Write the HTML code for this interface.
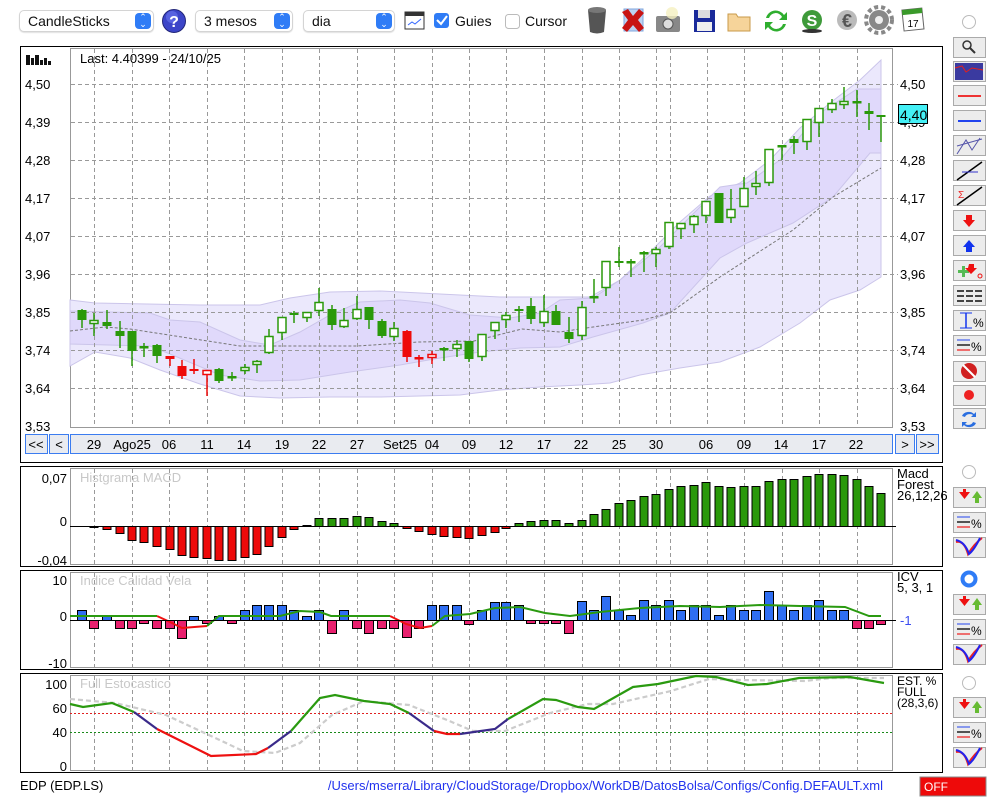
<!DOCTYPE html>
<html><head><meta charset="utf-8">
<style>
*{margin:0;padding:0;box-sizing:border-box}
body{width:1000px;height:800px;background:#fff;font-family:"Liberation Sans",sans-serif;position:relative;overflow:hidden;color:#111}
.sel{position:absolute;top:10px;height:22px;border:1px solid #d4d4d4;border-radius:5px;background:#fff;box-shadow:0 1px 1px rgba(0,0,0,.12);font-size:14px;line-height:20px;padding-left:8px}
.sel .st{position:absolute;right:2px;top:2px;width:16px;height:16px;border-radius:4px;background:#2f7cf6;color:#fff;font-size:9px;line-height:7px;text-align:center;padding-top:1px}
.lbl{position:absolute;font-size:14px}
svg{position:absolute;left:0;top:0}
</style></head><body>
<div class="sel" style="left:19px;width:135px">CandleSticks<div class="st">&#8963;<br>&#8964;</div></div>
<div class="sel" style="left:195px;width:98px">3 mesos<div class="st">&#8963;<br>&#8964;</div></div>
<div class="sel" style="left:303px;width:92px">dia<div class="st">&#8963;<br>&#8964;</div></div>
<div class="lbl" style="left:455px;top:13px">Guies</div>
<div class="lbl" style="left:525px;top:13px">Cursor</div>

<svg width="1000" height="800" id="s" font-family="Liberation Sans, sans-serif">
<circle cx="174" cy="21" r="11.5" fill="#3c45c8" stroke="#22267a"/>
<circle cx="172" cy="17" r="6" fill="#6b78f0" opacity=".6"/>
<text x="174" y="27" font-size="16" font-weight="bold" fill="#fff" text-anchor="middle">?</text>
<rect x="405" y="12" width="19" height="17" fill="#fff" stroke="#333"/>
<rect x="405" y="12" width="19" height="4" fill="#333"/>
<polyline points="408,25 412,22 415,24 421,19" fill="none" stroke="#36f" stroke-width="1"/>
<rect x="434" y="13" width="15" height="15" rx="3" fill="#2f7cf6"/>
<polyline points="437,20 441,24 447,16" fill="none" stroke="#fff" stroke-width="2"/>
<rect x="505.5" y="14.5" width="14" height="14" rx="3" fill="#fff" stroke="#bbb"/>
<path d="M588,10 h18 l-2,22 q-7,3 -14,0 z" fill="#555"/><ellipse cx="597" cy="10" rx="9" ry="3" fill="#777"/>
<rect x="624" y="9" width="19" height="22" fill="#bcd3f3" stroke="#7fa6dc"/>
<path d="M622,12 l6,-3 l5,7 l6,-7 l5,4 l-6,7 l6,8 l-5,4 l-6,-7 l-6,7 l-5,-4 l6,-8 z" fill="#c81414"/>
<rect x="656" y="16" width="24" height="16" rx="2" fill="#888"/><circle cx="668" cy="24" r="5" fill="#ddd" stroke="#555"/><circle cx="672" cy="13" r="6" fill="#f5f0c0" opacity=".8"/>
<rect x="694" y="10" width="21" height="22" fill="#1a2a9a"/><rect x="698" y="10" width="12" height="8" fill="#ddd"/><rect x="697" y="22" width="15" height="9" fill="#eee"/>
<path d="M728,14 h8 l2,3 h12 v14 h-22 z" fill="#f6d49a" stroke="#c89a4a"/>
<path d="M766,18 a10,10 0 0 1 18,-3 l3,-3 v8 h-8 l3,-3 a7,7 0 0 0 -13,1 z M786,24 a10,10 0 0 1 -18,3 l-3,3 v-8 h8 l-3,3 a7,7 0 0 0 13,-1 z" fill="#2fae2f"/>
<circle cx="812" cy="20" r="10" fill="#3e9a3a"/><text x="812" y="26" font-size="16" font-weight="bold" fill="#fff" text-anchor="middle">S</text><ellipse cx="812" cy="31" rx="10" ry="2" fill="#333"/>
<circle cx="847" cy="20" r="10" fill="#bbb"/><text x="847" y="27" font-size="18" font-weight="bold" fill="#555" text-anchor="middle">€</text>
<circle cx="879" cy="20" r="10" fill="#888"/><circle cx="879" cy="20" r="13" fill="none" stroke="#888" stroke-width="4" stroke-dasharray="4,3"/><circle cx="879" cy="20" r="4" fill="#eee"/>
<rect x="903" y="9" width="20" height="21" fill="#fff" stroke="#666" transform="rotate(-6 913 20)"/><rect x="903" y="9" width="20" height="5" fill="#3a9a2a" transform="rotate(-6 913 20)"/>
<text x="913" y="27" font-size="10" text-anchor="middle">17</text>

<rect x="20.5" y="46.5" width="922" height="416" fill="#fff" stroke="#000"/>
<rect x="70.5" y="48.5" width="822" height="379" fill="#fff" stroke="#999"/>
<g fill="#111"><rect x="26" y="55" width="4" height="10"/><rect x="31" y="58" width="3" height="7"/><rect x="35" y="55" width="4" height="10"/><rect x="40" y="60" width="3" height="5"/><rect x="44" y="58" width="3" height="7"/><rect x="48" y="61" width="3" height="4"/></g>
<g id="bands"></g>
<g id="grid"></g>
<text x="80" y="63" font-size="13">Last: 4.40399 - 24/10/25</text>
<g font-size="13">
<text x="25" y="89">4,50</text><text x="25" y="127">4,39</text><text x="25" y="165">4,28</text><text x="25" y="203">4,17</text><text x="25" y="241">4,07</text><text x="25" y="279">3,96</text><text x="25" y="317">3,85</text><text x="25" y="355">3,74</text><text x="25" y="393">3,64</text><text x="25" y="431">3,53</text>
<text x="900" y="89">4,50</text><text x="900" y="127">4,39</text><text x="900" y="165">4,28</text><text x="900" y="203">4,17</text><text x="900" y="241">4,07</text><text x="900" y="279">3,96</text><text x="900" y="317">3,85</text><text x="900" y="355">3,74</text><text x="900" y="393">3,64</text><text x="900" y="431">3,53</text>
</g>
<g id="candles"></g>
<rect x="898.5" y="104.5" width="29" height="19" fill="#44f0f6" stroke="#000"/>
<text x="900" y="120" font-size="14">4,40</text>
<g fill="#e9ebf0" stroke="#3b7cf0">
<rect x="25.5" y="434.5" width="22" height="19"/><rect x="49.5" y="434.5" width="19" height="19"/><rect x="70.5" y="434.5" width="822" height="19"/><rect x="895.5" y="434.5" width="19" height="19"/><rect x="916.5" y="434.5" width="22" height="19"/></g>
<g font-size="13" text-anchor="middle">
<text x="36" y="449">&lt;&lt;</text><text x="59" y="449">&lt;</text><text x="905" y="449">&gt;</text><text x="927" y="449">&gt;&gt;</text>
<text x="94" y="449">29</text><text x="132" y="449">Ago25</text><text x="169" y="449">06</text><text x="207" y="449">11</text><text x="244" y="449">14</text><text x="282" y="449">19</text><text x="319" y="449">22</text><text x="357" y="449">27</text><text x="400" y="449">Set25</text><text x="432" y="449">04</text><text x="469" y="449">09</text><text x="506" y="449">12</text><text x="544" y="449">17</text><text x="581" y="449">22</text><text x="619" y="449">25</text><text x="656" y="449">30</text><text x="706" y="449">06</text><text x="744" y="449">09</text><text x="781" y="449">14</text><text x="819" y="449">17</text><text x="856" y="449">22</text>
</g>

<rect x="20.5" y="466.5" width="922" height="100" fill="#fff" stroke="#000"/>
<rect x="70.5" y="468.5" width="822" height="96" fill="#fff" stroke="#999"/>
<g id="grid2"></g>
<text x="80" y="482" font-size="13" fill="#c8c8c8">Histgrama MACD</text>
<g font-size="13" text-anchor="end"><text x="67" y="483">0,07</text><text x="67" y="526">0</text><text x="67" y="565">-0,04</text></g>
<g font-size="13"><text x="897" y="478">Macd</text><text x="897" y="489">Forest</text><text x="897" y="500">26,12,26</text></g>
<g id="macd"></g>
<line x1="70" y1="526.5" x2="896" y2="526.5" stroke="#000"/>

<rect x="20.5" y="570.5" width="922" height="99" fill="#fff" stroke="#000"/>
<rect x="70.5" y="572.5" width="822" height="95" fill="#fff" stroke="#999"/>
<g id="grid3"></g>
<text x="80" y="585" font-size="13" fill="#c8c8c8">Indice Calidad Vela</text>
<g font-size="13" text-anchor="end"><text x="67" y="585">10</text><text x="67" y="621">0</text><text x="67" y="668">-10</text></g>
<g font-size="13"><text x="897" y="581">ICV</text><text x="897" y="592">5, 3, 1</text><text x="900" y="625" fill="#3b4cf0">-1</text></g>
<g id="icv"></g>
<line x1="70" y1="620.5" x2="896" y2="620.5" stroke="#000"/>

<rect x="20.5" y="673.5" width="922" height="99" fill="#fff" stroke="#000"/>
<rect x="70.5" y="675.5" width="822" height="95" fill="#fff" stroke="#999"/>
<g id="grid4"></g>
<text x="80" y="688" font-size="13" fill="#c8c8c8">Full Estocastico</text>
<g font-size="13" text-anchor="end"><text x="67" y="689">100</text><text x="67" y="713">60</text><text x="67" y="737">40</text><text x="67" y="771">0</text></g>
<g font-size="12"><text x="897" y="685">EST. %</text><text x="897" y="696">FULL</text><text x="897" y="707">(28,3,6)</text></g>
<line x1="70" y1="713.5" x2="893" y2="713.5" stroke="#e02020" stroke-dasharray="2,2"/>
<line x1="70" y1="732.5" x2="893" y2="732.5" stroke="#1a8a1a" stroke-dasharray="2,2"/>
<polyline fill="none" stroke="#cccccc" stroke-width="2.2" stroke-dasharray="5,3" points="70,699 115,703 166,715 211,736 243,751 275,753 300,743 332,715 364,701 409,705 447,720 473,731 505,731 550,713 588,704 613,704 671,691 709,679 741,680 805,681 831,678 884,678"/>
<g fill="none" stroke-width="2.2">
<polyline stroke="#2a9a10" points="70,704 83,707 112,703 134,712"/>
<polyline stroke="#3a2a8a" points="134,712 157,729"/>
<polyline stroke="#ee1111" points="157,729 211,756 256,754 268,748"/>
<polyline stroke="#3a2a8a" points="268,748 291,731"/>
<polyline stroke="#2a9a10" points="291,731 320,698 335,695 364,701 390,704 409,713"/>
<polyline stroke="#3a2a8a" points="409,713 434,731"/>
<polyline stroke="#ee1111" points="434,731 447,734 460,734"/>
<polyline stroke="#3a2a8a" points="460,734 495,729 508,719"/>
<polyline stroke="#2a9a10" points="508,719 543,699 556,700 578,707 594,709 633,687 658,684 696,676 716,677 748,685 767,684 799,678 850,677 884,683"/>
</g>

<g id="side"></g>

<text x="20" y="790" font-size="13">EDP (EDP.LS)</text>
<text x="883" y="790" font-size="13" fill="#2233ee" text-anchor="end">/Users/mserra/Library/CloudStorage/Dropbox/WorkDB/DatosBolsa/Configs/Config.DEFAULT.xml</text>
<rect x="920" y="777" width="66" height="19" fill="#ee0a0a" stroke="#888"/>
<text x="924" y="791" font-size="12" fill="#fff">OFF</text>
</svg>
<script>
var NS="http://www.w3.org/2000/svg";
function el(p,t,a){var e=document.createElementNS(NS,t);for(var k in a)e.setAttribute(k,a[k]);document.getElementById(p).appendChild(e);return e;}
var VX=[94,132,169,207,244,282,319,357,394,432,469,506,544,582,619,656,670,707,744,782,819,857];
function vgrid(id,y1,y2){VX.forEach(function(x){el(id,'line',{x1:x+.5,y1:y1,x2:x+.5,y2:y2,stroke:'#999','stroke-dasharray':'4,3'})});}
vgrid('grid',49,427);vgrid('grid2',469,564);vgrid('grid3',573,667);vgrid('grid4',676,770);
[84,122,160,198,236,274,312,350,388].forEach(function(y){el('grid','line',{x1:71,y1:y+.5,x2:898,y2:y+.5,stroke:'#999','stroke-dasharray':'4,3'})});
el('bands','polygon',{points:"70,300 95,303 200,305 260,305 290,298 330,292 380,291 440,294 500,297 560,297 590,297 620,280 650,252 680,222 710,196 740,183 770,160 800,128 830,103 860,80 881,60 881,277 860,290 830,300 800,323 760,347 720,362 680,368 640,375 610,383 580,385 540,387 500,390 460,395 420,396 380,397 330,397 280,398 240,396 200,384 160,370 130,358 95,352 70,366",fill:'#ebe8fc',stroke:'#cbc5ea'});
el('bands','polygon',{points:"70,311 150,313 170,320 200,322 240,340 270,345 300,332 330,315 360,302 400,300 430,303 470,315 510,318 540,313 560,300 593,298 620,280 660,247 720,187 747,183 780,160 820,113 857,89 881,89 881,153 870,153 833,197 793,223 747,243 720,258 670,313 643,323 593,337 560,347 520,348 480,352 440,358 400,365 350,372 300,380 260,381 220,375 170,354 150,346 70,344",fill:'#e0d9fb',stroke:'#cbc5ea'});
el('bands','polyline',{points:"70,331 105,327 130,329 240,346 357,346 419,342 474,341 522,329 560,332 593,327 643,320 670,313 720,277 793,230 833,197 881,168",fill:'none',stroke:'#777','stroke-dasharray':'3,2'});
var C=[[82,'g',310,320,309,328],[94,'w',320,323,313,336],[107,'g',322,326,310,329],[120,'g',331,336,321,348],[132,'g',331,351,331,366],[144,'g',347,348,343,357],[157,'g',345,356,344,363],[170,'r',356,359,356,366],[182,'r',366,376,360,379],[194,'r',369,371,359,374],[207,'rw',370,374,370,396],[219,'g',369,381,368,383],[232,'g',377,378,372,381],[245,'w',367,370,364,374],[257,'w',361,364,360,373],[269,'w',336,352,329,354],[282,'w',317,332,317,340],[294,'g',313,315,311,323],[307,'w',312,317,312,322],[319,'w',302,310,288,316],[332,'g',309,325,305,330],[344,'w',320,326,308,328],[357,'w',309,318,296,320],[369,'g',307,320,307,329],[382,'g',321,336,319,338],[394,'w',328,336,322,341],[407,'r',331,357,330,362],[419,'r',358,359,355,367],[432,'rw',354,357,351,364],[444,'g',349,350,347,361],[457,'w',344,348,340,357],[469,'g',341,359,341,362],[482,'w',334,356,334,361],[495,'w',322,330,322,339],[506,'w',315,319,312,328],[519,'g',309,311,306,322],[531,'g',306,319,298,324],[544,'w',311,322,295,327],[556,'g',311,325,305,325],[569,'g',332,339,317,343],[582,'w',307,335,301,340],
[594,'g',297,297,279,303],[606,'w',261,287,261,296],[619,'g',261,263,247,267],[631,'g',262,262,259,277],[644,'g',253,253,251,272],[656,'w',249,253,247,267],[669,'w',222,246,222,249],[681,'w',223,228,223,239],[694,'w',216,224,215,233],[706,'w',201,215,201,223],[719,'g',193,223,193,223],[731,'w',209,217,189,223],[744,'w',188,206,177,206],[756,'w',183,186,171,195],[769,'w',149,182,149,186],[782,'g',146,146,146,160],[794,'g',139,143,136,154],[807,'w',119,141,119,150],[819,'w',108,122,108,137],[832,'w',103,109,99,113],[844,'w',101,104,87,109],[857,'g',102,102,90,117],[869,'g',111,114,103,130],[881,'g',115,117,115,142]];
C.forEach(function(c){var x=c[0],t=c[1],col=(t[0]=='r')?'#ee0a0a':'#2a990a';
 el('candles','line',{x1:x,y1:c[4],x2:x,y2:c[5],stroke:col,'stroke-width':1.5});
 var h=Math.max(c[3]-c[2],1);
 if(t=='w'||t=='rw'){el('candles','rect',{x:x-4,y:c[2]+.5,width:8,height:h,fill:'#fff',stroke:col,'stroke-width':1.5});}
 else if(h<=1){el('candles','rect',{x:x-4.5,y:c[2]-1,width:9,height:2.5,fill:col});}
 else el('candles','rect',{x:x-4.5,y:c[2],width:9,height:h,fill:col});});
var M=[526,527,529,533,540,542,546,549,555,557,558,560,560,557,554,546,537,529,525,518,518,518,516,517,521,523,528,531,534,536,537,538,535,532,528,523,521,520,520,523,520,514,509,503,500,496,494,489,486,485,482,486,487,486,486,481,479,479,476,474,474,475,479,486,493];
M.forEach(function(v,i){var x=C[i][0];if(v==526)return;var y=Math.min(v,526),h=Math.abs(v-526);
 el('macd','rect',{x:x-4,y:y+.5,width:8,height:h,fill:v<526?'#2a990a':'#ee0a0a',stroke:'#000'});});
var I=[610,628,616,628,628,623,628,628,638,616,623,616,623,610,605,605,605,610,616,610,633,610,628,633,628,628,637,628,605,605,605,624,610,602,602,605,623,623,623,633,601,610,596,610,615,600,605,600,610,605,605,615,605,610,610,591,605,610,605,600,610,610,628,628,624];
I.forEach(function(v,i){var x=C[i][0];var y=Math.min(v,620),h=Math.abs(v-620);
 el('icv','rect',{x:x-4.5,y:y+.5,width:9,height:h,fill:v<620?'#2f6ef2':'#e8206e',stroke:'#000'});});
[["#2a9a10","70,616 157,616"],["#ee1111","157,616 170,622 182,628 207,626"],["#2a9a10","207,626 219,616 280,616 300,611 320,612 331,616 390,616"],["#ee1111","390,616 406,624 420,628 432,626"],["#2a9a10","432,626 445,616 470,614 495,608 520,607 545,613 570,616 600,612 640,608 680,606 720,607 760,605 800,606 845,607 869,616 881,616"]].forEach(function(p){el('icv','polyline',{points:p[1],fill:'none',stroke:p[0],'stroke-width':2});});
function btn(y){el('side','rect',{x:953.5,y:y+.5,width:32,height:20,fill:'#ececec',stroke:'#aaa'});}
function radio(y,on){el('side','circle',{cx:969,cy:y,r:6.5,fill:'#fff',stroke:on?'#2f7cf6':'#bbb','stroke-width':on?4:1});}
radio(22,false);
var ys=[37,61,85,110,135,160,185,210,235,260,285,310,335,361,385,408];ys.forEach(btn);
el('side','circle',{cx:967,cy:45,r:4,fill:'none',stroke:'#333','stroke-width':1.5});el('side','line',{x1:970,y1:48,x2:975,y2:53,stroke:'#333','stroke-width':2});
el('side','rect',{x:955,y:63,width:28,height:17,fill:'#3a3aa0'});el('side','polyline',{points:"955,68 962,66 966,72 972,68 983,70",fill:'none',stroke:'#e02020'});
el('side','line',{x1:958,y1:96,x2:981,y2:96,stroke:'#e33',"stroke-width":2});
el('side','line',{x1:958,y1:121,x2:981,y2:121,stroke:'#24e',"stroke-width":2});
el('side','polyline',{points:"957,154 966,140 972,150 980,138",fill:'none',stroke:'#55a'});el('side','line',{x1:957,y1:146,x2:982,y2:139,stroke:'#55a'});
el('side','line',{x1:957,y1:180,x2:982,y2:162,stroke:'#000','stroke-width':1.5});el('side','line',{x1:962,y1:172,x2:978,y2:172,stroke:'#33c'});
el('side','line',{x1:957,y1:205,x2:982,y2:187,stroke:'#000','stroke-width':1.5});el('side','text',{x:958,y:198,'font-size':10,fill:'#e22'}).textContent='Σ';
el('side','path',{d:"M966,215 h6 v5 h3 l-6,7 l-6,-7 h3 z",fill:'#ee1111'});
el('side','path',{d:"M966,252 h6 v-5 h3 l-6,-7 l-6,7 h3 z",fill:'#1133ee'});
el('side','path',{d:"M958,270 h4 v-4 h3 v4 h4 v3 h-4 v4 h-3 v-4 h-4 z",fill:'#5b5'});el('side','path',{d:"M969,264 h5 v4 h3 l-6,6 l-6,-6 h3 z",fill:'#e11'});el('side','circle',{cx:980,cy:276,r:2,fill:'none',stroke:'#e11'});
[291,296,301].forEach(function(y){el('side','line',{x1:957,y1:y,x2:982,y2:y,stroke:'#444','stroke-width':2,'stroke-dasharray':'7,2'});});
el('side','line',{x1:966,y1:313,x2:966,y2:328,stroke:'#13e','stroke-width':1.5});el('side','line',{x1:960,y1:313,x2:972,y2:313,stroke:'#13e'});el('side','line',{x1:960,y1:328,x2:972,y2:328,stroke:'#13e'});
el('side','text',{x:973,y:327,'font-size':12}).textContent='%';
function pct(y){el('side','line',{x1:957,y1:y+5,x2:970,y2:y+5,stroke:'#24e'});el('side','line',{x1:957,y1:y+10,x2:970,y2:y+10,stroke:'#222','stroke-width':1.5});el('side','line',{x1:957,y1:y+15,x2:970,y2:y+15,stroke:'#e44','stroke-width':1.5});el('side','text',{x:971,y:y+16,'font-size':12}).textContent='%';}
pct(335);
el('side','circle',{cx:969,cy:371,r:8,fill:'#d02020'});el('side','line',{x1:963,y1:365,x2:975,y2:377,stroke:'#fff','stroke-width':2});
el('side','circle',{cx:969,cy:395,r:5,fill:'#ee2222'});
el('side','path',{d:"M962,416 a7,6 0 0 1 12,-2 l2,-2 v5 h-5 l2,-2 a5,4 0 0 0 -8,2 z M976,423 a7,6 0 0 1 -12,2 l-2,2 v-5 h5 l-2,2 a5,4 0 0 0 8,-2 z",fill:'#2a6ee0'});
function grp(r,y0,on){radio(r,on);btn(y0);btn(y0+25);btn(y0+50);
 el('side','path',{d:"M959,"+(y0+5)+" h4 v-3 h3 v3 h4 l-5.5,7 z",fill:'#e11'});
 el('side','path',{d:"M975,"+(y0+16)+" v-5 h-3 l5,-7 l5,7 h-3 v5 z",fill:'#6b3'});
 pct(y0+25);
 el('side','path',{d:"M956,"+(y0+55)+" q8,-2 12,12 q6,-10 14,-16",fill:'none',stroke:'#e22','stroke-width':2});
 el('side','path',{d:"M956,"+(y0+53)+" q9,2 13,14 q5,-4 11,-16",fill:'none',stroke:'#22e','stroke-width':2});}
grp(472,487,false);grp(579,594,true);grp(683,697,false);
</script>
</body></html>
